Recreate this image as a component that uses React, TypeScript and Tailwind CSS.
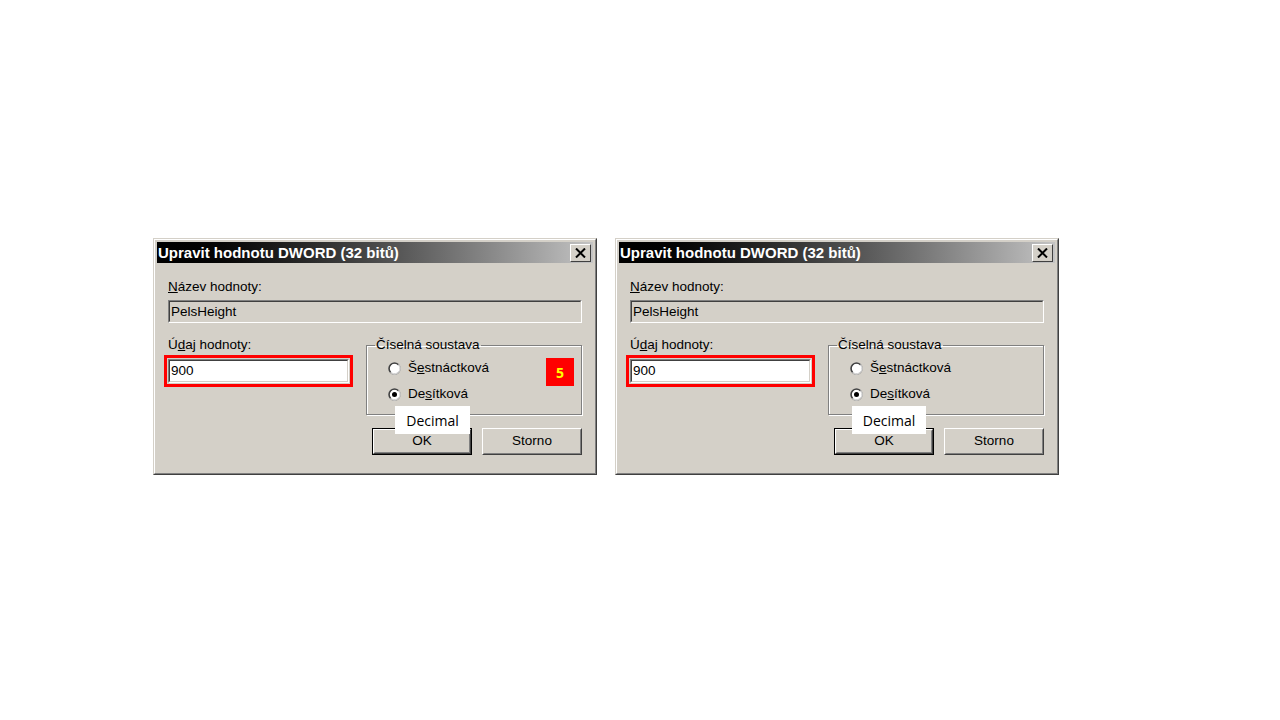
import React from "react";

// Two classic Windows "edit DWORD" dialogs side by side, grey 3D bevels,
// the left one carries a red step badge; both show a "Decimal" tooltip.

const Radio = ({ checked }: { checked?: boolean }) => (
  <svg width="13" height="13" viewBox="0 0 13 13" className="shrink-0">
    <circle cx="6.5" cy="6.5" r="5.7" fill="#ffffff" stroke="#8a8a8a" strokeWidth="1.2" />
    <path d="M2.7 10.3 A5.3 5.3 0 0 1 10.3 2.7" fill="none" stroke="#404040" strokeWidth="1.4" />
    <path d="M2.6 10.4 A5.5 5.5 0 0 0 10.4 2.6" fill="none" stroke="#f2f2f2" strokeWidth="1" />
    {checked && <circle cx="6.5" cy="6.5" r="2.5" fill="#000000" />}
  </svg>
);

const Button = ({ label, isDefault }: { label: string; isDefault?: boolean }) => (
  <div className={isDefault ? "w-[100px] h-[27px] border border-black" : "w-[100px] h-[27px]"}>
    <div className="h-full border border-t-white border-l-white border-r-[#404040] border-b-[#404040]">
      <div className="h-full flex items-center justify-center border border-t-[#d4d0c8] border-l-[#d4d0c8] border-r-[#808080] border-b-[#808080] text-[13.5px] text-black">
        {label}
      </div>
    </div>
  </div>
);

const Sunken = ({ children, bg }: { children: React.ReactNode; bg: string }) => (
  <div className="h-full border border-t-[#808080] border-l-[#808080] border-r-white border-b-white">
    <div className={`h-full flex items-center pl-[1px] pt-px border border-t-[#404040] border-l-[#404040] border-r-[#d4d0c8] border-b-[#d4d0c8] ${bg}`}>
      {children}
    </div>
  </div>
);

const Dialog = ({ badge, tipClass }: { badge?: boolean; tipClass: string }) => (
  <div className="relative w-[444px] h-[237px] border border-t-[#d4d0c8] border-l-[#d4d0c8] border-r-[#404040] border-b-[#404040] bg-[#d4d0c8] font-['Liberation_Sans',Arial,sans-serif] text-black">
    <div className="h-full flex flex-col p-[2px] border border-t-white border-l-white border-r-[#808080] border-b-[#808080]">
      <div className="h-[21px] flex items-center justify-between pl-[1px] pr-[2px] bg-linear-to-r from-black to-[#c4c4c4]">
        <span className="text-white font-bold text-[15px] leading-[21px]">Upravit hodnotu DWORD (32 bitů)</span>
        <div className="w-[21px] h-[18px] border border-t-white border-l-white border-r-[#404040] border-b-[#404040] bg-[#d4d0c8] flex items-center justify-center">
          <svg width="11" height="10" viewBox="0 0 11 10">
            <path d="M1 0.5 L10 9.5 M10 0.5 L1 9.5" stroke="#000" strokeWidth="2" />
          </svg>
        </div>
      </div>

      <div className="flex flex-col px-[11px] text-[13.5px]">
        <div className="mt-[16px] leading-[16px]">
          <u>N</u>ázev hodnoty:
        </div>
        <div className="mt-[5px] h-[23px]">
          <Sunken bg="bg-[#d4d0c8]">PelsHeight</Sunken>
        </div>

        <div className="mt-[14px] flex justify-between">
          <div className="w-[181px] flex flex-col">
            <div className="leading-[16px]">
              Ú<u>d</u>aj hodnoty:
            </div>
            <div className="relative mt-[6px] h-[24px]">
              <Sunken bg="bg-white">900</Sunken>
              <div className="absolute -inset-[4px] border-[3px] border-[#ff0000]" />
            </div>
          </div>

          <div className="w-[216px] flex flex-col">
            <fieldset className="h-[78px] border border-[#808080] shadow-[inset_1px_1px_0_#ffffff,1px_1px_0_#ffffff]">
              <legend className="ml-[8px] px-px leading-[16px]">Číselná soustava</legend>
              <div className="mt-[5px] flex flex-col gap-[6px] pl-[21px]">
                <div className="h-[20px] flex items-center gap-[7px]">
                  <Radio />
                  <span>
                    Š<u>e</u>stnáctková
                  </span>
                </div>
                <div className="h-[20px] flex items-center gap-[7px]">
                  <Radio checked />
                  <span>
                    De<u>s</u>ítková
                  </span>
                </div>
              </div>
            </fieldset>
            <div className="mt-[13px] flex justify-end gap-[10px]">
              <Button label="OK" isDefault />
              <Button label="Storno" />
            </div>
          </div>
        </div>
      </div>
    </div>

    {badge && (
      <div className="absolute left-[392px] top-[119px] w-[28px] h-[28px] bg-[#ff0000] flex items-center justify-center text-[#ffff00] font-bold text-[14px] font-['Open_Sans',sans-serif]">
        5
      </div>
    )}
    <div className={`absolute top-[167px] h-[28px] bg-white flex items-center justify-center text-[14px] text-black font-['Open_Sans',sans-serif] ${tipClass}`}>
      Decimal
    </div>
  </div>
);

export default function App() {
  return (
    <div className="w-[1280px] h-[720px] bg-white pt-[238px] pl-[153px] flex items-start gap-[18px]">
      <Dialog badge tipClass="left-[241px] w-[75px]" />
      <Dialog tipClass="left-[236px] w-[74px]" />
    </div>
  );
}
